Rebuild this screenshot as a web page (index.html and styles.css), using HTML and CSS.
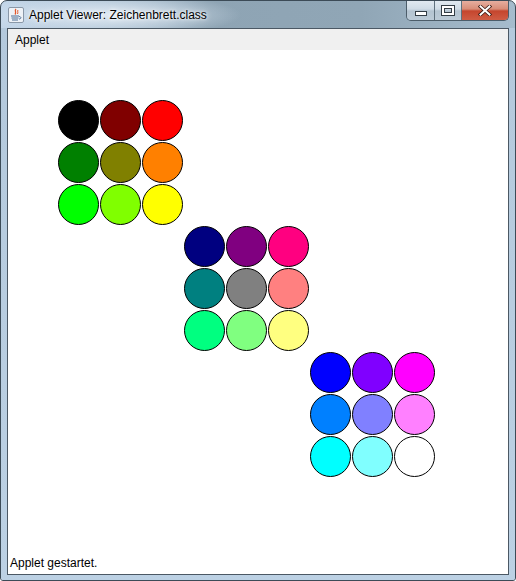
FILE: index.html
```html
<!DOCTYPE html>
<html>
<head>
<meta charset="utf-8">
<link rel="stylesheet" href="styles.css">
</head>
<body>
<div class="window">
  <div class="titlebar">
    <svg class="app-icon" width="16" height="16" viewBox="0 0 16 16">
      <rect x="0.5" y="0.5" width="15" height="15" rx="1.5" fill="#eef2f7" stroke="#8a98a8"/>
      <path d="M8 2 C6 4 9 5 7 7.5" fill="none" stroke="#e2572b" stroke-width="1.3"/>
      <path d="M10 3 C9 4.5 10.5 5 9.5 7" fill="none" stroke="#e2572b" stroke-width="1"/>
      <path d="M3 9 H11 M3.5 11 H10.5 M4 13 H10" stroke="#4a6d94" stroke-width="1.2"/>
      <path d="M11 9.5 C13.5 9.5 13.5 12 11 12" fill="none" stroke="#4a6d94" stroke-width="1"/>
    </svg>
    <span class="title">Applet Viewer: Zeichenbrett.class</span>
    <div class="controls">
      <div class="btn btn-min"><span class="min-glyph"></span></div>
      <div class="btn btn-max"><span class="max-glyph"></span></div>
      <div class="btn btn-close">
        <svg width="14" height="11" viewBox="0 0 14 11">
          <path d="M2.5 1.5 L11.5 9.5 M11.5 1.5 L2.5 9.5" stroke="#3b1a14" stroke-width="3.6" stroke-linecap="square"/>
          <path d="M2.5 1.5 L11.5 9.5 M11.5 1.5 L2.5 9.5" stroke="#ffffff" stroke-width="2" stroke-linecap="square"/>
        </svg>
      </div>
    </div>
  </div>
  <div class="client">
    <div class="menubar"><span class="menu-item">Applet</span></div>
    <div class="canvas">
      <div class="board">
        <div class="group g1">
          <span class="dot" style="background:#000000"></span>
          <span class="dot" style="background:#800000"></span>
          <span class="dot" style="background:#ff0000"></span>
          <span class="dot" style="background:#008000"></span>
          <span class="dot" style="background:#808000"></span>
          <span class="dot" style="background:#ff8000"></span>
          <span class="dot" style="background:#00ff00"></span>
          <span class="dot" style="background:#80ff00"></span>
          <span class="dot" style="background:#ffff00"></span>
        </div>
        <div class="group g2">
          <span class="dot" style="background:#000080"></span>
          <span class="dot" style="background:#800080"></span>
          <span class="dot" style="background:#ff0080"></span>
          <span class="dot" style="background:#008080"></span>
          <span class="dot" style="background:#808080"></span>
          <span class="dot" style="background:#ff8080"></span>
          <span class="dot" style="background:#00ff80"></span>
          <span class="dot" style="background:#80ff80"></span>
          <span class="dot" style="background:#ffff80"></span>
        </div>
        <div class="group g3">
          <span class="dot" style="background:#0000ff"></span>
          <span class="dot" style="background:#8000ff"></span>
          <span class="dot" style="background:#ff00ff"></span>
          <span class="dot" style="background:#0080ff"></span>
          <span class="dot" style="background:#8080ff"></span>
          <span class="dot" style="background:#ff80ff"></span>
          <span class="dot" style="background:#00ffff"></span>
          <span class="dot" style="background:#80ffff"></span>
          <span class="dot" style="background:#ffffff"></span>
        </div>
      </div>
    </div>
    <div class="status">Applet gestartet.</div>
  </div>
</div>
</body>
</html>
```
FILE: styles.css
```css
html, body {
  margin: 0;
  padding: 0;
  background: #ffffff;
}

.window {
  box-sizing: border-box;
  width: 516px;
  height: 581px;
  border: 1px solid #3c4b57;
  border-radius: 7px 7px 3px 3px;
  background: linear-gradient(90deg, #c3d6e9 0%, #a9bfd1 18%, #8ea4b4 40%, #90a6b6 70%, #a6bccd 100%);
  display: flex;
  flex-direction: column;
  overflow: hidden;
  position: relative;
}

.window::after {
  content: "";
  position: absolute;
  left: 0;
  right: 0;
  top: 27px;
  bottom: 0;
  background: linear-gradient(180deg, #b4c9dc 0%, #bcd1e4 100%);
  z-index: 0;
}

.titlebar {
  position: relative;
  z-index: 1;
  height: 27px;
  flex: none;
  display: flex;
  align-items: center;
  padding-left: 7px;
  background: radial-gradient(ellipse 130px 22px at 110px 14px, rgba(235,242,250,0.85) 0%, rgba(220,232,244,0.45) 60%, rgba(220,232,244,0) 100%);
}

.app-icon {
  flex: none;
  margin-right: 5px;
  margin-top: 1px;
}

.title {
  font-family: "Liberation Sans", Arial, sans-serif;
  font-size: 12px;
  color: #000000;
  text-shadow: 0 0 6px #ffffff, 0 0 3px #ffffff;
  margin-top: 1px;
}

.controls {
  position: absolute;
  top: -1px;
  right: 6px;
  display: flex;
  height: 20px;
  border: 1px solid #4c5d6a;
  border-top: none;
  border-radius: 0 0 5px 5px;
  overflow: hidden;
}

.btn {
  display: flex;
  align-items: center;
  justify-content: center;
  height: 20px;
}

.btn-min, .btn-max {
  width: 27px;
  background: linear-gradient(180deg, #e3ebf2 0%, #d0dce6 45%, #b4c4d1 55%, #bccbd7 100%);
  border-right: 1px solid #5f707d;
}

.btn-max {
  width: 26px;
}

.btn-close {
  width: 46px;
  background: linear-gradient(180deg, #e8b2a4 0%, #d88d78 45%, #c5462e 55%, #cf5c44 100%);
}

.min-glyph {
  width: 10px;
  height: 3px;
  background: #ffffff;
  border: 1px solid #333d45;
  margin-top: 6px;
}

.max-glyph {
  width: 8px;
  height: 5px;
  border: 2px solid #ffffff;
  outline: 1px solid #333d45;
  box-shadow: inset 0 0 0 1px #333d45;
}

.client {
  position: relative;
  z-index: 1;
  flex: 1;
  margin: 0 6px 5px 6px;
  border: 1px solid #4b5864;
  background: #ffffff;
  display: flex;
  flex-direction: column;
}

.menubar {
  height: 21px;
  flex: none;
  background: #f0f0f0;
  display: flex;
  align-items: center;
  padding-left: 7px;
}

.menu-item {
  font-family: "Liberation Sans", Arial, sans-serif;
  font-size: 12px;
  color: #000000;
  margin-top: 1px;
}

.canvas {
  flex: 1;
  padding: 50px 0 0 50px;
}

.board {
  display: grid;
  grid-template-columns: repeat(3, 126px);
  grid-template-rows: repeat(3, 126px);
}

.group {
  display: grid;
  grid-template-columns: repeat(3, 42px);
  grid-template-rows: repeat(3, 42px);
}

.g1 { grid-column: 1; grid-row: 1; }
.g2 { grid-column: 2; grid-row: 2; }
.g3 { grid-column: 3; grid-row: 3; }

.dot {
  display: block;
  width: 41px;
  height: 41px;
  box-sizing: border-box;
  border: 1px solid #000000;
  border-radius: 50%;
}

.status {
  flex: none;
  height: 19px;
  padding-left: 2px;
  font-family: "Liberation Sans", Arial, sans-serif;
  font-size: 12px;
  color: #000000;
  line-height: 16px;
}
```
